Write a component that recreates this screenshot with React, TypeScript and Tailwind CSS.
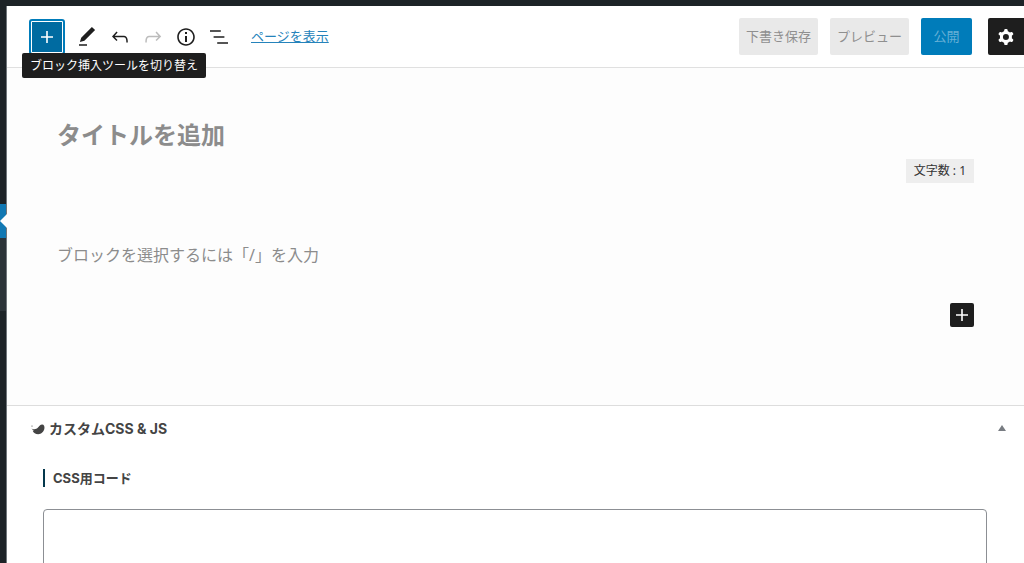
import { useState } from "react";
import type { ReactNode } from "react";

const icons = {
  plus: "M18 11.2h-5.2V6h-1.6v5.2H6v1.6h5.2V18h1.6v-5.2H18z",
  edit: "M20.1 5.1L16.9 2 6.2 12.7l-1.3 4.4 4.5-1.3L20.1 5.1zM4 20.8h8v-1.5H4v1.5z",
  undo: "M18.3 11.7c-.6-.6-1.4-.9-2.3-.9H6.7l2.9-3.3-1.1-1-4.5 5L8.5 16l1-1-2.7-2.7H16c.5 0 .9.2 1.3.5 1 1 1 3.4 1 4.5v.3h1.5v-.2c0-1.5 0-4.3-1.5-5.7z",
  redo: "M15.6 6.5l-1.1 1 2.9 3.3H8c-.9 0-1.7.3-2.3.9-1.4 1.5-1.4 4.2-1.4 5.6v.2h1.5v-.3c0-1.1 0-3.5 1-4.5.3-.3.7-.5 1.3-.5h9.2L14.5 15l1.1 1.1 4.6-4.6-4.6-5z",
  info: "M12 3.2c-4.8 0-8.8 3.9-8.8 8.8 0 4.8 3.9 8.8 8.8 8.8 4.8 0 8.8-3.9 8.8-8.8 0-4.8-4-8.8-8.8-8.8zm0 16c-4 0-7.2-3.3-7.2-7.2C4.8 8 8 4.8 12 4.8s7.2 3.3 7.2 7.2c0 4-3.2 7.2-7.2 7.2zM11 17h2v-6h-2v6zm0-8h2V7h-2v2z",
  list: "M13.8 5.2H3v1.5h10.8V5.2zm-3.6 12v1.5H21v-1.5H10.2zm7.2-6H6.6v1.5h10.8v-1.5z",
  cog: "M10.289 4.836A1 1 0 0111.275 4h1.306a1 1 0 01.987.836l.244 1.466c.787.26 1.503.679 2.108 1.218l1.393-.522a1 1 0 011.216.437l.653 1.13a1 1 0 01-.23 1.273l-1.148.944a6.025 6.025 0 010 2.435l1.149.946a1 1 0 01.23 1.272l-.653 1.13a1 1 0 01-1.216.437l-1.394-.522c-.605.54-1.32.958-2.108 1.218l-.244 1.466a1 1 0 01-.987.836h-1.306a1 1 0 01-.986-.836l-.244-1.466a5.995 5.995 0 01-2.108-1.218l-1.394.522a1 1 0 01-1.217-.436l-.653-1.131a1 1 0 01.23-1.272l1.149-.946a6.026 6.026 0 010-2.435l-1.148-.944a1 1 0 01-.23-1.272l.653-1.131a1 1 0 011.217-.437l1.393.522a5.994 5.994 0 012.108-1.218l.244-1.466zM14.929 12a3 3 0 11-6 0 3 3 0 016 0z",
};

const tools = [
  { label: "ツール", icon: icons.edit },
  { label: "元に戻す", icon: icons.undo },
  { label: "やり直す", icon: icons.redo, disabled: true },
  { label: "詳細", icon: icons.info },
  { label: "リスト表示", icon: icons.list },
];

function Icon({ d }: { d: string }) {
  return (
    <svg viewBox="0 0 24 24" className="size-6 shrink-0" fill="currentColor" fillRule="evenodd" aria-hidden="true">
      <path d={d} />
    </svg>
  );
}

function HeaderButton({ className, children }: { className: string; children: ReactNode }) {
  return (
    <button type="button" className={`h-[37px] shrink-0 rounded-[2px] text-[13px] ${className}`}>
      {children}
    </button>
  );
}

function AdminMenu() {
  return (
    <nav className="flex w-[7px] shrink-0 flex-col border-r border-[#70767b] bg-[#1d2327]" aria-label="管理メニュー">
      <div className="h-[198px] shrink-0" />
      {/* current item, with the notch pointing at the content */}
      <div className="relative h-[34px] shrink-0 bg-[#1178b3]">
        <svg viewBox="0 0 8 16" className="absolute top-[9px] left-0 h-4 w-2" fill="#fdfdfd" aria-hidden="true">
          <path d="M8 0v16L0 8z" />
        </svg>
      </div>
      <div className="h-[73px] shrink-0 bg-[#2c3338]" />
    </nav>
  );
}

function EditorHeader() {
  return (
    <header className="flex h-[62px] shrink-0 items-center border-b border-[#e0e0e0] bg-white pl-6">
      <div className="relative">
        <button
          type="button"
          aria-label="ブロック挿入ツールを切り替え"
          aria-describedby="inserter-tip"
          className="flex size-8 items-center justify-center rounded-[1px] border border-white bg-[#006ba1] text-white outline-2 outline-[#007cba]"
        >
          <Icon d={icons.plus} />
        </button>
        <div
          id="inserter-tip"
          role="tooltip"
          className="absolute top-8 -left-[9px] z-10 rounded-[2px] bg-[#1e1e1e] px-2 py-1 text-xs leading-[17px] whitespace-nowrap text-white"
        >
          ブロック挿入ツールを切り替え
        </div>
      </div>
      <div className="ml-3 flex gap-[9px]">
        {tools.map((t) => (
          <button
            key={t.label}
            type="button"
            aria-label={t.label}
            disabled={t.disabled}
            className="text-[#1e1e1e] disabled:text-[#bcbcbc]"
          >
            <Icon d={t.icon} />
          </button>
        ))}
      </div>
      <a href="#preview" className="ml-5 text-[13px] text-[#2583bb] underline">
        ページを表示
      </a>
      <div className="ml-auto flex">
        <HeaderButton className="mr-3 w-[79px] bg-[#e9e9e9] text-[#8f8f8f]">下書き保存</HeaderButton>
        <HeaderButton className="mr-3 w-[79px] bg-[#e9e9e9] text-[#8f8f8f]">プレビュー</HeaderButton>
        <HeaderButton className="mr-4 w-[51px] bg-[#007cba] text-[#66b0d6]">公開</HeaderButton>
        <button
          type="button"
          aria-label="設定"
          className="flex h-[37px] w-9 items-center justify-center rounded-l-[2px] bg-[#1e1e1e] text-white"
        >
          <Icon d={icons.cog} />
        </button>
      </div>
    </header>
  );
}

function Canvas() {
  const [title, setTitle] = useState("");
  const [body, setBody] = useState("");

  return (
    <section className="flex h-[337px] shrink-0 flex-col bg-[#fdfdfd] px-[50px] font-['Noto_Sans','Noto_Sans_CJK_JP',sans-serif] text-[#333]">
      <input
        aria-label="タイトル"
        placeholder="タイトルを追加"
        value={title}
        onChange={(e) => setTitle(e.target.value)}
        className="mt-[46px] h-10 w-full text-2xl font-bold outline-none placeholder:text-[#8c8c8c]"
      />
      <div className="mt-[5px] self-end bg-[#eee] px-2 text-xs leading-6">文字数 : 1</div>
      <input
        aria-label="ブロック"
        placeholder="ブロックを選択するには「/」を入力"
        value={body}
        onChange={(e) => setBody(e.target.value)}
        className="mt-[60px] h-6 w-full text-base outline-none placeholder:text-[#8c8c8c]"
      />
      <button
        type="button"
        aria-label="ブロックを追加"
        className="mt-9 flex size-6 items-center justify-center self-end rounded-[2px] bg-[#1e1e1e] text-white"
      >
        <Icon d={icons.plus} />
      </button>
    </section>
  );
}

function CodeMetaBox() {
  return (
    <section className="flex grow flex-col border-t border-[#ddd] bg-white text-sm font-bold text-[#444]">
      <div className="flex h-[46px] shrink-0 items-center justify-between pr-[17px] pl-6">
        <h2 className="flex items-center gap-1">
          <svg viewBox="0 0 14 14" className="size-3.5" fill="currentColor" aria-hidden="true">
            <circle cx="1" cy="4" r=".6" />
            <path d="M.6 6.400C2.400 7.800 5.400 7.600 7 5.600C8.300 3.900 9.200 2.500 11.200 2.500C12.900 2.500 13.800 4.200 13.400 6.500C12.800 9.900 10.300 12.200 7.200 12.200C4.500 12.200 2.500 10.800 1.700 8.700L3 8.500C1.900 8 1.100 7.300.6 6.400Z" />
          </svg>
          カスタムCSS &amp; JS
        </h2>
        <button type="button" aria-label="パネルを切り替え" className="text-[#787c82]">
          <svg viewBox="0 0 10 10" className="size-2.5" fill="currentColor" aria-hidden="true">
            <path d="M5 1l4 6H1z" />
          </svg>
        </button>
      </div>
      <div className="flex grow flex-col pr-[37px] pl-9">
        <label htmlFor="css-code" className="mt-[17px] border-l-2 border-[#04384c] pl-2 text-[13px] leading-[18px]">
          CSS用コード
        </label>
        <textarea
          id="css-code"
          className="mt-[22px] h-60 w-full shrink-0 resize-none rounded-[4px] border border-[#8c8f94] p-2 font-normal outline-none"
        />
      </div>
    </section>
  );
}

export default function App() {
  return (
    <div className="flex h-screen flex-col overflow-hidden bg-[#1d2327] font-[Inter,'Noto_Sans_CJK_JP',sans-serif]">
      <div className="h-1.5 shrink-0" />
      <div className="flex min-h-0 grow">
        <AdminMenu />
        <main className="flex min-w-0 grow flex-col overflow-hidden">
          <EditorHeader />
          <Canvas />
          <CodeMetaBox />
        </main>
      </div>
    </div>
  );
}
